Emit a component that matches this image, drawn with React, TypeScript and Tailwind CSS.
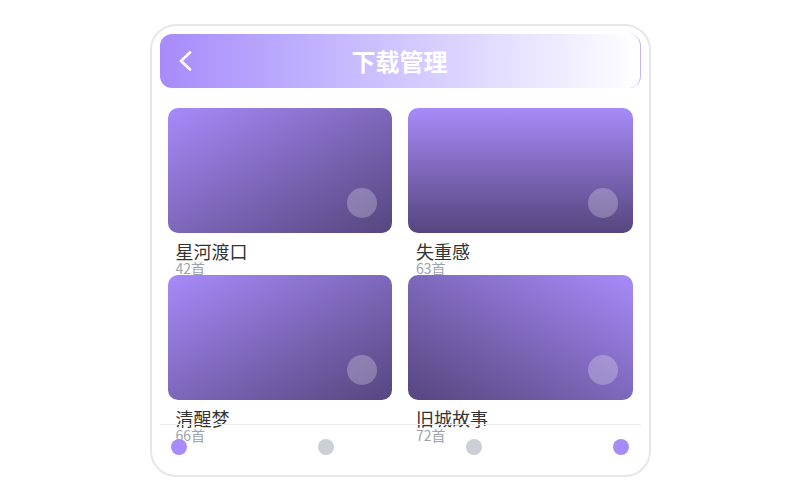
import React from "react";

const items = [
  { title: "星河渡口", count: "42首", grad: "bg-gradient-to-br from-[#a78bfa] to-[#56467f]" },
  { title: "失重感", count: "63首", grad: "bg-gradient-to-b from-[#a78bfa] to-[#56467f]" },
  { title: "清醒梦", count: "66首", grad: "bg-gradient-to-br from-[#a78bfa] to-[#56467f]" },
  { title: "旧城故事", count: "72首", grad: "bg-gradient-to-bl from-[#a78bfa] to-[#56467f]" },
];

export default function App() {
  return (
    <div className="w-full h-[500px] bg-white flex justify-center font-['Noto_Sans_CJK_SC','Noto_Sans',sans-serif]">
      <div className="relative mt-6 w-[501px] h-[453px] border-2 border-[#e5e7eb] rounded-[26px] bg-white overflow-hidden">
        <div className="pt-2 px-2">
          <div className="relative h-[54px] rounded-xl border-r border-[#c4b5fd] bg-gradient-to-r from-[#a78bfa] to-[#ffffff] flex items-center justify-center">
            <svg className="absolute left-[18px] top-[17px]" width="14" height="20" viewBox="0 0 14 20" fill="none">
              <polyline points="12,1.5 3,10 12,18.5" stroke="white" strokeWidth="2.6" strokeLinecap="round" strokeLinejoin="round" />
            </svg>
            <span className="text-white text-2xl font-bold leading-none">下载管理</span>
          </div>
        </div>
        <div className="mt-5 px-4 grid grid-cols-2 gap-x-4">
          {items.map((it) => (
            <div key={it.title} className="flex flex-col">
              <div className={`relative h-[125px] rounded-[10px] ${it.grad}`}>
                <div className="absolute right-[15px] bottom-[15px] w-[30px] h-[30px] rounded-full bg-white/25" />
              </div>
              <div className="mt-2 pl-2 text-[18px] leading-5 text-[#333333]">{it.title}</div>
              <div className="pl-2 text-sm leading-[14px] text-[#9ca3af]">{it.count}</div>
            </div>
          ))}
        </div>
        <div className="absolute left-2 right-2 bottom-0 h-[51px] border-t border-[#ececef] flex justify-between items-start px-[11px] pt-[14px]">
          <div className="w-4 h-4 rounded-full bg-[#a78bfa]" />
          <div className="w-4 h-4 rounded-full bg-[#cbd0d6]" />
          <div className="w-4 h-4 rounded-full bg-[#cbd0d6]" />
          <div className="w-4 h-4 rounded-full bg-[#a78bfa]" />
        </div>
      </div>
    </div>
  );
}
